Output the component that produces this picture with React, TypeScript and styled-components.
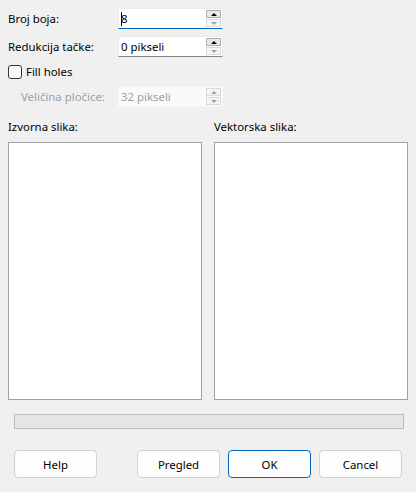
import React from "react";
import styled, { createGlobalStyle } from "styled-components";

const Global = createGlobalStyle`
  html, body { margin: 0; padding: 0; background: #f0f0f0; }
  body { font-family: "Noto Sans", "Open Sans", sans-serif; font-size: 11.4px; color: #000; }
  * { box-sizing: border-box; }
`;

const Dialog = styled.div`
  width: 416px;
  height: 492px;
  padding: 8px 8px 0 8px;
  display: flex;
  flex-direction: column;
`;

const Form = styled.div`
  display: grid;
  grid-template-columns: 110px 105px;
  grid-template-rows: 21px 21px 15px 21px;
  row-gap: 7px;
  align-items: center;
`;

const Label = styled.div<{ $disabled?: boolean; $indent?: boolean }>`
  color: ${(p) => (p.$disabled ? "#a0a0a0" : "#000")};
  padding-left: ${(p) => (p.$indent ? "13px" : "0")};
  line-height: 16px;
  white-space: nowrap;
`;

const SpinBox = styled.div<{ $focused?: boolean; $disabled?: boolean }>`
  position: relative;
  height: 21px;
  width: 105px;
  background: ${(p) => (p.$disabled ? "#fafafa" : "#fff")};
  border: 1px solid ${(p) => (p.$disabled ? "#f5f5f5" : "#ececec")};
  border-bottom: 1px solid
    ${(p) => (p.$disabled ? "#f5f5f5" : p.$focused ? "#0067c0" : "#868686")};
  display: flex;
  align-items: center;
  padding-left: 2px;
`;

const Value = styled.span<{ $disabled?: boolean }>`
  flex: 1;
  color: ${(p) => (p.$disabled ? "#a0a0a0" : "#000")};
  line-height: 16px;
  display: flex;
  align-items: center;
`;

const Caret = styled.span`
  display: inline-block;
  width: 1px;
  height: 14px;
  background: #000;
  margin-right: -1px;
`;

const Arrows = styled.div`
  display: flex;
  flex-direction: column;
  width: 15px;
  margin-right: 1px;
  gap: 1px;
`;

const ArrowButton = styled.div<{ $dim?: boolean }>`
  height: 8px;
  border: 1px solid ${(p) => (p.$dim ? "#dadada" : "#adadad")};
  background: ${(p) => (p.$dim ? "#f5f5f5" : "#e9e9e9")};
  display: flex;
  align-items: center;
  justify-content: center;
`;

const Tri = styled.span<{ $down?: boolean; $color: string }>`
  width: 0;
  height: 0;
  border-left: 3.5px solid transparent;
  border-right: 3.5px solid transparent;
  ${(p) =>
    p.$down
      ? `border-top: 3.5px solid ${p.$color};`
      : `border-bottom: 3.5px solid ${p.$color};`}
`;

const CheckRow = styled.label`
  grid-column: 1 / span 2;
  display: flex;
  align-items: center;
  gap: 4px;
  height: 15px;
`;

const Check = styled.span`
  width: 14px;
  height: 14px;
  border: 1px solid #333;
  border-radius: 3px;
  background: #f8f8f8;
`;

const Panels = styled.div`
  margin-top: 12px;
  display: grid;
  grid-template-columns: 194px 194px;
  column-gap: 12px;
`;

const Panel = styled.div`
  display: flex;
  flex-direction: column;
  gap: 7px;
`;

const PanelTitle = styled.div`
  line-height: 16px;
`;

const ImageBox = styled.div`
  height: 258px;
  background: #fff;
  border: 1px solid #a0a0a0;
`;

const Progress = styled.div`
  margin: 14px 4px 0 6px;
  height: 15px;
  background: #e6e6e6;
  border: 1px solid #bcbcbc;
`;

const Buttons = styled.div`
  margin: 21px 0 0 6px;
  display: flex;
  align-items: center;
`;

const Button = styled.button<{ $primary?: boolean; $gapLeft?: number }>`
  width: 83px;
  height: 28px;
  margin-left: ${(p) => p.$gapLeft ?? 0}px;
  background: #fdfdfd;
  border: 1px solid ${(p) => (p.$primary ? "#0067c0" : "#d0d0d0")};
  border-radius: 4px;
  font-family: "Noto Sans", "Open Sans", sans-serif;
  font-size: 11.4px;
  color: #000;
  padding: 0;
`;

function Spin({
  value,
  focused,
  disabled,
  caret,
}: {
  value: string;
  focused?: boolean;
  disabled?: boolean;
  caret?: boolean;
}) {
  return (
    <SpinBox $focused={focused} $disabled={disabled}>
      <Value $disabled={disabled}>
        {caret && <Caret />}
        {value}
      </Value>
      <Arrows>
        <ArrowButton $dim={disabled}>
          <Tri $color={disabled ? "#a0a0a0" : "#000"} />
        </ArrowButton>
        <ArrowButton $dim>
          <Tri $down $color="#a0a0a0" />
        </ArrowButton>
      </Arrows>
    </SpinBox>
  );
}

export default function App() {
  return (
    <>
      <Global />
      <Dialog>
        <Form>
          <Label>Broj boja:</Label>
          <Spin value="8" focused caret />
          <Label>Redukcija tačke:</Label>
          <Spin value="0 pikseli" />
          <CheckRow>
            <Check />
            <span>Fill holes</span>
          </CheckRow>
          <Label $disabled $indent>
            Veličina pločice:
          </Label>
          <Spin value="32 pikseli" disabled />
        </Form>
        <Panels>
          <Panel>
            <PanelTitle>Izvorna slika:</PanelTitle>
            <ImageBox />
          </Panel>
          <Panel>
            <PanelTitle>Vektorska slika:</PanelTitle>
            <ImageBox />
          </Panel>
        </Panels>
        <Progress />
        <Buttons>
          <Button>Help</Button>
          <Button $gapLeft={40}>Pregled</Button>
          <Button $primary $gapLeft={8}>
            OK
          </Button>
          <Button $gapLeft={8}>Cancel</Button>
        </Buttons>
      </Dialog>
    </>
  );
}
